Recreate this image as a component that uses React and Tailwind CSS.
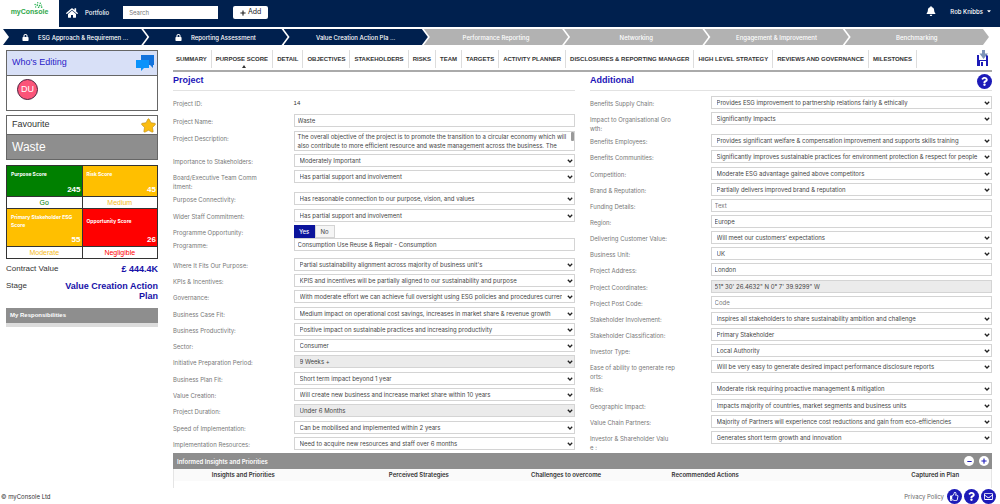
import React from 'react';
import { FaHome, FaLock, FaBell, FaPlus, FaMinus, FaCaretDown, FaStar, FaQuestion, FaRegThumbsUp, FaRegEnvelope } from 'react-icons/fa';

const STAGES = [
  { name: 'ESG Approach & Requiremen ...', locked: true, done: true },
  { name: 'Reporting Assessment', locked: true, done: true },
  { name: 'Value Creation Action Pla ...', done: true },
  { name: 'Performance Reporting' },
  { name: 'Networking' },
  { name: 'Engagement & Improvement' },
  { name: 'Benchmarking' },
];

const TABS = [
  'SUMMARY', 'PURPOSE SCORE', 'DETAIL', 'OBJECTIVES', 'STAKEHOLDERS', 'RISKS', 'TEAM', 'TARGETS',
  'ACTIVITY PLANNER', 'DISCLOSURES & REPORTING MANAGER', 'HIGH LEVEL STRATEGY',
  'REVIEWS AND GOVERNANCE', 'MILESTONES',
];

const PROJECT_FIELDS = [
  { label: 'Project ID:', type: 'static', value: '14' },
  { label: 'Project Name:', type: 'text', value: 'Waste' },
  {
    label: 'Project Description:',
    type: 'area',
    value: 'The overall objective of the project is to promote the transition to a circular economy which will also contribute to more efficient resource and waste management across the business. The project covers all sites.',
  },
  { label: 'Importance to Stakeholders:', value: 'Moderately Important' },
  { label: 'Board/Executive Team Comm\nitment:', value: 'Has partial support and involvement' },
  { label: 'Purpose Connectivity:', value: 'Has reasonable connection to our purpose, vision, and values' },
  { label: 'Wider Staff Commitment:', value: 'Has partial support and involvement' },
  { label: 'Programme Opportunity:', type: 'toggle' },
  { label: 'Programme:', type: 'text', value: 'Consumption Use Reuse & Repair - Consumption', tall: true },
  { label: 'Where It Fits Our Purpose:', value: "Partial sustainability alignment across majority of business unit's" },
  { label: 'KPIs & Incentives:', value: 'KPIS and incentives will be partially aligned to our sustainability and purpose' },
  { label: 'Governance:', value: 'With moderate effort we can achieve full oversight using ESG policies and procedures currently in place' },
  { label: 'Business Case Fit:', value: 'Medium impact on operational cost savings, increases in market share & revenue growth' },
  { label: 'Business Productivity:', value: 'Positive impact on sustainable practices and increasing productivity' },
  { label: 'Sector:', value: 'Consumer' },
  { label: 'Initiative Preparation Period:', value: '9 Weeks +', disabled: true },
  { label: 'Business Plan Fit:', value: 'Short term impact beyond 1 year' },
  { label: 'Value Creation:', value: 'Will create new business and increase market share within 10 years' },
  { label: 'Project Duration:', value: 'Under 6 Months', disabled: true },
  { label: 'Speed of Implementation:', value: 'Can be mobilised and implemented within 2 years' },
  { label: 'Implementation Resources:', value: 'Need to acquire new resources and staff over 6 months' },
];

const ADDITIONAL_FIELDS = [
  { label: 'Benefits Supply Chain:', value: 'Provides ESG improvement to partnership relations fairly & ethically' },
  { label: 'Impact to Organisational Gro\nwth:', value: 'Significantly Impacts' },
  { label: 'Benefits Employees:', value: 'Provides significant welfare & compensation improvement and supports skills training' },
  { label: 'Benefits Communities:', value: 'Significantly improves sustainable practices for environment protection & respect for people' },
  { label: 'Competition:', value: 'Moderate ESG advantage gained above competitors' },
  { label: 'Brand & Reputation:', value: 'Partially delivers improved brand & reputation' },
  { label: 'Funding Details:', type: 'text', placeholder: 'Text' },
  { label: 'Region:', type: 'text', value: 'Europe' },
  { label: 'Delivering Customer Value:', value: 'Will meet our customers’ expectations' },
  { label: 'Business Unit:', value: 'UK' },
  { label: 'Project Address:', type: 'text', value: 'London' },
  { label: 'Project Coordinates:', type: 'text', value: '51° 30\' 26.4632" N 0° 7\' 39.9299" W', disabled: true },
  { label: 'Project Post Code:', type: 'text', placeholder: 'Code' },
  { label: 'Stakeholder Involvement:', value: 'Inspires all stakeholders to share sustainability ambition and challenge' },
  { label: 'Stakeholder Classification:', value: 'Primary Stakeholder' },
  { label: 'Investor Type:', value: 'Local Authority' },
  { label: 'Ease of ability to generate rep\norts:', value: 'Will be very easy to generate desired impact performance disclosure reports' },
  { label: 'Risk:', value: 'Moderate risk requiring proactive management & mitigation' },
  { label: 'Geographic Impact:', value: 'Impacts majority of countries, market segments and business units' },
  { label: 'Value Chain Partners:', value: 'Majority of Partners will experience cost reductions and gain from eco-efficiencies' },
  { label: 'Investor & Shareholder Valu\ne :', value: 'Generates short term growth and innovation' },
];

const SCORES = [
  { title: 'Purpose Score', score: 245, rating: 'Go', bg: 'bg-[#008000]', text: 'text-[#008000]' },
  { title: 'Risk Score', score: 45, rating: 'Medium', bg: 'bg-[#ffbf00]', text: 'text-[#f5b921]' },
  { title: 'Primary Stakeholder ESG Score', score: 55, rating: 'Moderate', bg: 'bg-[#ffbf00]', text: 'text-[#f5b921]' },
  { title: 'Opportunity Score', score: 26, rating: 'Negligible', bg: 'bg-[#ff0000]', text: 'text-[#ff0000]' },
];

const Logo = () => (
  <a href="#home" className="flex h-[27px] w-[59px] flex-col items-center bg-white pt-[2px] font-['Liberation_Sans',Arial,sans-serif] text-[7px] leading-[8px] text-[#2fa84a]">
    <svg viewBox="0 0 36 7" className="h-[6px] w-[36px]" fill="#2fb457">
      <circle cx="27" cy="0.9" r="0.8" />
      <circle cx="30" cy="1.4" r="0.9" />
      <circle cx="24" cy="3" r="0.9" />
      <circle cx="26.5" cy="3.6" r="1" />
      <circle cx="29.3" cy="4.2" r="1" />
      <circle cx="31.4" cy="3.5" r="0.7" />
      <circle cx="24.6" cy="5.8" r="0.8" />
      <circle cx="28" cy="6.2" r="0.9" />
      <circle cx="31.6" cy="6" r="0.9" />
    </svg>
    <span className="font-bold">myConsole</span>
  </a>
);

const Header = () => (
  <header className="flex h-[27px] items-start bg-[#00204e] text-white">
    <Logo />
    <nav className="flex h-[25px] items-center text-[6px] font-medium">
      <a href="#home" aria-label="Home" className="ml-[7px]">
        <FaHome size={12} />
      </a>
      <a href="#portfolio" className="ml-[7px]">Portfolio</a>
      <input
        type="search"
        placeholder="Search"
        aria-label="Search"
        className="ml-[14px] h-[13px] w-[95px] bg-white px-[6px] text-[6px] font-normal text-[#444] placeholder:text-[#777]"
      />
      <button className="ml-[15px] flex h-[13px] w-[35px] items-center justify-center gap-[2px] rounded-[2px] bg-white text-[7px] font-normal text-[#222]">
        <FaPlus size={6} />
        Add
      </button>
    </nav>
    <div className="ml-auto flex h-[22px] items-center pr-[8px] text-[6px] font-medium">
      <FaBell size={10} className="mr-[14px]" />
      <button className="flex items-center gap-[3px]">
        Rob Knibbs
        <FaCaretDown size={6} />
      </button>
    </div>
  </header>
);

const StageBar = () => (
  <ol className="mt-[2px] mr-[11px] ml-[3px] flex h-4 text-[6px] font-medium text-white">
    {STAGES.map((stage) => (
      <li
        key={stage.name}
        className={`-mr-[4px] flex flex-1 items-center justify-center gap-[9px] [clip-path:polygon(0_0,calc(100%_-_6px)_0,100%_50%,calc(100%_-_6px)_100%,0_100%,6px_50%)] last:mr-0 ${
          stage.done ? 'bg-[#00204e]' : 'bg-[#b2b2b2]'
        }`}
      >
        {stage.locked && <FaLock size={7} />}
        {stage.name}
      </li>
    ))}
  </ol>
);

const ScoreGrid = () => (
  <div className="mt-[5px] grid grid-cols-2 gap-px border border-[#333] bg-[#333]">
    {SCORES.map((s, i) => (
      <div key={s.title} className="flex flex-col gap-px">
        <div className={`flex flex-col justify-between px-[4px] pt-[4px] font-bold text-white ${s.bg} ${i < 2 ? 'h-[30px]' : 'h-[37px]'}`}>
          <span className={`flex items-center font-['Inter',sans-serif] text-[5px] leading-[8px] ${i < 2 ? 'h-[8px]' : 'h-[16px]'}`}>
            {s.title}
          </span>
          <span className="-mr-[3px] text-right text-[8px] leading-[12px]">{s.score}</span>
        </div>
        <div className={`bg-white text-center text-[7px] leading-[11px] ${s.text}`}>{s.rating}</div>
      </div>
    ))}
  </div>
);

const Sidebar = () => (
  <aside className="w-[152px] shrink-0 font-['Liberation_Sans',Arial,sans-serif] text-[#333]">
    <section className="h-[61px] border border-[#666]">
      <div className="flex h-[25px] items-center justify-between border-b border-[#666] bg-[#d8e0f7] pr-[2px] pl-[5px]">
        <h2 className="text-[9px] text-[#2a22c8]">Who's Editing</h2>
        <svg viewBox="0 0 20 18" className="h-[18px] w-[20px]">
          <path d="M6 1h13v10h-1v3l-3-3H6z" fill="#1272dc" />
          <path d="M1 6h13v8H9l-3 3v-3H1z" fill="#0a93fb" />
        </svg>
      </div>
      <div className="m-[3px] ml-[10px] flex h-[21px] w-[21px] items-center justify-center rounded-full border border-[#4a1f3c] bg-[#fb5479] text-[9px] text-white">
        DU
      </div>
    </section>

    <section className="mt-[4px] border border-[#666]">
      <div className="flex h-[18px] items-center justify-between pr-px pl-[5px]">
        <h2 className="text-[9px]">Favourite</h2>
        <FaStar size={15} className="text-[#fbbd12]" stroke="#b98a1c" strokeWidth={24} />
      </div>
      <div className="flex h-[25px] items-center border-t border-[#666] bg-[#8e8e8e] px-[5px] text-[12px] text-white">Waste</div>
    </section>

    <ScoreGrid />

    <dl className="mt-[5px] grid grid-cols-[auto_1fr] gap-y-[7px] text-[9px] leading-[10px]">
      <dt className="text-[8px]">Contract Value</dt>
      <dd className="text-right font-bold text-[#1611a8]">£ 444.4K</dd>
      <dt className="text-[8px]">Stage</dt>
      <dd className="text-right font-bold text-[#1611a8]">Value Creation Action Plan</dd>
    </dl>

    <section className="mt-[7px] border-b-4 border-[#dcdcdc]">
      <h2 className="bg-[#8e8e8e] px-[4px] text-[6px] leading-[15px] font-bold text-white">My Responsibilities</h2>
    </section>
  </aside>
);

const SaveIcon = () => (
  <svg viewBox="0 0 12 16" className="h-[16px] w-[12px]">
    <path d="M0 5h2v5h7V5h1l1 1v10H0z" fill="#1d1bb8" />
    <path d="M3 11h6v5H3z" fill="#fff" />
    <path d="M4 12h2v4H4z" fill="#1d1bb8" />
    <path d="M5 0h3v3.500h3L6.500 9 2.500 3.500H5z" fill="#7d93b8" />
  </svg>
);

const TabBar = () => (
  <div className="flex h-[22px] items-start justify-between border-b-2 border-[#aaa]">
    <nav className="-ml-px flex font-['Liberation_Sans',Arial,sans-serif] text-[6px] font-bold whitespace-nowrap text-[#333]">
      {TABS.map((tab) => (
        <a key={tab} href="#tab" className="relative flex h-[18px] items-center border-r border-[#ddd] px-[4px]">
          {tab}
          {tab === 'PURPOSE SCORE' && (
            <svg viewBox="0 0 4 3" className="absolute bottom-0 left-1/2 h-[3px] w-[4px]" fill="#333">
              <path d="M2 0l2 3H0z" />
            </svg>
          )}
        </a>
      ))}
    </nav>
    <button aria-label="Save" className="mr-[3px]">
      <SaveIcon />
    </button>
  </div>
);

const FieldControl = ({ id, field }) => {
  const box = `block w-full border border-[#d4d4d4] text-[6px] text-[#444] placeholder:text-[#777] ${
    field.disabled ? 'bg-[#ebebeb]' : 'bg-white'
  }`;

  if (field.type === 'static') {
    return (
      <output id={id} className="block pt-[3px] font-['Liberation_Sans',Arial,sans-serif] text-[6px] leading-[9px] text-[#333]">
        {field.value}
      </output>
    );
  }
  if (field.type === 'text') {
    return (
      <input
        id={id}
        type="text"
        defaultValue={field.value}
        placeholder={field.placeholder}
        readOnly={field.disabled}
        className={`${box} h-[13px] px-[3px]`}
      />
    );
  }
  if (field.type === 'area') {
    return (
      <div className="relative">
        <textarea
          id={id}
          defaultValue={field.value}
          className={`${box} h-[20px] resize-none overflow-hidden pr-[5px] pl-[3px] leading-[9px]`}
        />
        <span className="absolute top-px right-px h-[9px] w-[3px] rounded-[1px] bg-[#999]" />
      </div>
    );
  }
  if (field.type === 'toggle') {
    return (
      <div className="flex h-[13px] text-[6px]">
        <button className="w-[21px] bg-[#0b149c] font-medium text-white">Yes</button>
        <button className="w-[20px] border border-[#d4d4d4] bg-[#f5f5f5] text-[#444]">No</button>
      </div>
    );
  }
  return (
    <div className="relative">
      <select id={id} defaultValue={field.value} className={`${box} h-[13px] appearance-none pr-[12px] pl-[5px]`}>
        <option>{field.value}</option>
      </select>
      <svg viewBox="0 0 6 4" className="pointer-events-none absolute top-[5px] right-[2px] h-[4px] w-[6px]" fill="none" stroke="#222" strokeWidth="1.3">
        <path d="M0.8 0.8L3 3l2.2-2.2" />
      </svg>
    </div>
  );
};

const rowHeight = (field) => {
  if (field.type === 'static') return 'h-[18px]';
  if (field.type === 'area') return 'h-[23px]';
  if (field.type === 'toggle') return 'h-[13px]';
  if (field.tall) return 'h-[19px]';
  return field.label.includes('\n') ? 'h-[22px]' : 'h-[16px]';
};

const FieldGroup = ({ title, fields, action }) => (
  <section className="flex flex-col">
    <div className="flex h-[19px] items-center justify-between border-b border-[#e2e2e2]">
      <h2 className="font-['Liberation_Sans',Arial,sans-serif] text-[9px] font-bold text-[#1d14b8]">{title}</h2>
      {action}
    </div>
    <div className="flex min-h-[362px] flex-1 flex-col justify-between pt-[5px]">
      {fields.map((field, i) => {
        const id = `${title}-${i}`;
        return (
          <div key={id} className={`flex ${rowHeight(field)}`}>
            <label htmlFor={id} className="w-[30%] pt-[3px] text-[6px] leading-[9px] whitespace-pre-line text-[#777]">
              {field.label}
            </label>
            <div className="min-w-0 flex-1">
              <FieldControl id={id} field={field} />
            </div>
          </div>
        );
      })}
    </div>
  </section>
);

const RoundButton = ({ label, children }) => (
  <button aria-label={label} className="flex h-[15px] w-[15px] items-center justify-center rounded-full bg-[#1d1bb8] text-white">
    {children}
  </button>
);

const Insights = () => (
  <section>
    <div className="flex h-4 items-center justify-between bg-[#8e8e8e] pr-[3px] pl-[4px] text-[6px] font-semibold text-white">
      <h2>Informed Insights and Priorities</h2>
      <div className="flex gap-[5px] text-[#1d1bb8]">
        <button aria-label="Collapse" className="flex h-[10px] w-[10px] items-center justify-center rounded-full bg-white">
          <FaMinus size={5} />
        </button>
        <button aria-label="Expand" className="flex h-[10px] w-[10px] items-center justify-center rounded-full bg-white">
          <FaPlus size={6} />
        </button>
      </div>
    </div>
    <table className="w-full table-fixed border-x border-[#e5e5e5] text-[6px] leading-[12px] whitespace-nowrap text-[#333]">
      <thead className="bg-[#fafafa]">
        <tr>
          <th className="w-[17%] font-semibold">Insights and Priorities</th>
          <th className="w-[26%] font-semibold">Perceived Strategies</th>
          <th className="w-[10%] font-semibold">Challenges to overcome</th>
          <th className="w-[24%] font-semibold">Recommended Actions</th>
          <th className="pl-[76px] font-semibold">Captured in Plan</th>
        </tr>
      </thead>
      <tbody>
        <tr className="h-[7px]">
          <td colSpan={5} />
        </tr>
      </tbody>
    </table>
  </section>
);

const App = () => (
  <div className="flex min-h-screen flex-col bg-white font-['Inter',Arial,sans-serif]">
    <Header />
    <StageBar />
    <main className="flex gap-[15px] pt-[5px] pr-[8px] pl-[6px]">
      <Sidebar />
      <div className="min-w-0 flex-1">
        <TabBar />
        <div className="grid grid-cols-2 gap-x-[15px]">
          <FieldGroup title="Project" fields={PROJECT_FIELDS} />
          <FieldGroup
            title="Additional"
            fields={ADDITIONAL_FIELDS}
            action={
              <RoundButton label="Help">
                <FaQuestion size={9} />
              </RoundButton>
            }
          />
        </div>
        <Insights />
      </div>
    </main>
    <footer className="mt-auto flex h-4 items-center justify-between pr-[4px] pl-px text-[6px] text-[#333]">
      <span>© myConsole Ltd</span>
      <div className="flex items-center gap-[2px]">
        <a href="#privacy" className="mr-px text-[#666]">Privacy Policy</a>
        <RoundButton label="Like">
          <FaRegThumbsUp size={9} />
        </RoundButton>
        <RoundButton label="Support">
          <FaQuestion size={9} />
        </RoundButton>
        <RoundButton label="Contact">
          <FaRegEnvelope size={9} />
        </RoundButton>
      </div>
    </footer>
  </div>
);

export default App;
